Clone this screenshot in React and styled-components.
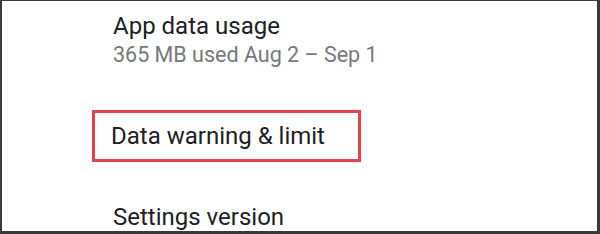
import React from 'react';
import styled, { createGlobalStyle } from 'styled-components';

const Global = createGlobalStyle`
	html, body { margin: 0; padding: 0; background: #fff; }
	body { font-family: Roboto, "Noto Sans", sans-serif; }
`;

const Frame = styled.div`
	box-sizing: border-box;
	width: 600px;
	height: 234px;
	overflow: hidden;
	border-style: solid;
	border-color: #3a3a3a;
	border-width: 1px 3px 3px 2px;
	background: #fff;
	padding: 10px 0 0 111px;
	display: flex;
	flex-direction: column;
`;

const Item = styled.div`
	display: flex;
	flex-direction: column;
	margin-top: ${p => p.top || 0}px;
`;

const Title = styled.div`
	font-size: 24px;
	line-height: 30px;
	color: #202124;
`;

const Summary = styled.div`
	font-size: 21.5px;
	line-height: 26px;
	margin-top: 1px;
	color: #77797c;
`;

const Highlight = styled.div`
	align-self: flex-start;
	box-sizing: border-box;
	width: 269px;
	height: 52px;
	margin-left: -21px;
	padding: 8px 0 0 16px;
	border: 3px solid #e2434f;
`;

export default function App() {
	return (
		<>
			<Global />
			<Frame>
				<Item>
					<Title>App data usage</Title>
					<Summary>365 MB used Aug 2 – Sep 1</Summary>
				</Item>
				<Item top={42}>
					<Highlight>
						<Title>Data warning &amp; limit</Title>
					</Highlight>
				</Item>
				<Item top={40}>
					<Title>Settings version</Title>
				</Item>
			</Frame>
		</>
	);
}
